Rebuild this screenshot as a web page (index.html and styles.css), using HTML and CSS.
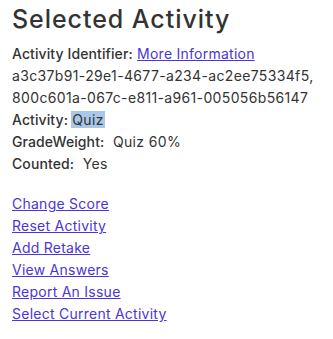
FILE: index.html
```html
<!DOCTYPE html>
<html>
<head>
<meta charset="utf-8">
<link rel="stylesheet" href="styles.css">
</head>
<body>
<div class="panel">
  <h1 class="title">Selected Activity</h1>
  <div class="details">
    <div class="row"><span class="label">Activity Identifier:</span> <a class="link" href="#">More Information</a></div>
    <div class="row">a3c37b91-29e1-4677-a234-ac2ee75334f5,</div>
    <div class="row">800c601a-067c-e811-a961-005056b56147</div>
    <div class="row"><span class="label">Activity:</span> <span class="sel">Quiz</span></div>
    <div class="row"><span class="label">GradeWeight:</span>&nbsp; Quiz 60%</div>
    <div class="row"><span class="label">Counted:</span>&nbsp; Yes</div>
  </div>
  <ul class="actions">
    <li><a class="link" href="#">Change Score</a></li>
    <li><a class="link" href="#">Reset Activity</a></li>
    <li><a class="link" href="#">Add Retake</a></li>
    <li><a class="link" href="#">View Answers</a></li>
    <li><a class="link" href="#">Report An Issue</a></li>
    <li><a class="link" href="#">Select Current Activity</a></li>
  </ul>
</div>
</body>
</html>
```

FILE: styles.css
```css
html, body {
  margin: 0;
  padding: 0;
  background: #ffffff;
}
body {
  font-family: Inter, "Liberation Sans", sans-serif;
  color: #333333;
  font-size: 14px;
  line-height: 22px;
  letter-spacing: 0.35px;
}
.panel {
  padding: 4px 12px 0 12px;
}
.title {
  margin: 0 0 9px 0;
  font-size: 25px;
  line-height: 30px;
  font-weight: 500;
  letter-spacing: 0.95px;
  color: #333333;
}
.details {
  display: flex;
  flex-direction: column;
}
.row {
  white-space: nowrap;
}
.label {
  font-weight: 500;
  letter-spacing: 0.1px;
}
.plain {
  letter-spacing: 0.2px;
}
.sel {
  background: #a9c7e6;
  padding: 0 1px;
  margin-left: -1px;
}
.link {
  color: #4a35d8;
  text-decoration: underline;
  letter-spacing: 0.25px;
}
.actions {
  list-style: none;
  margin: 18px 0 0 0;
  padding: 0;
}
```
